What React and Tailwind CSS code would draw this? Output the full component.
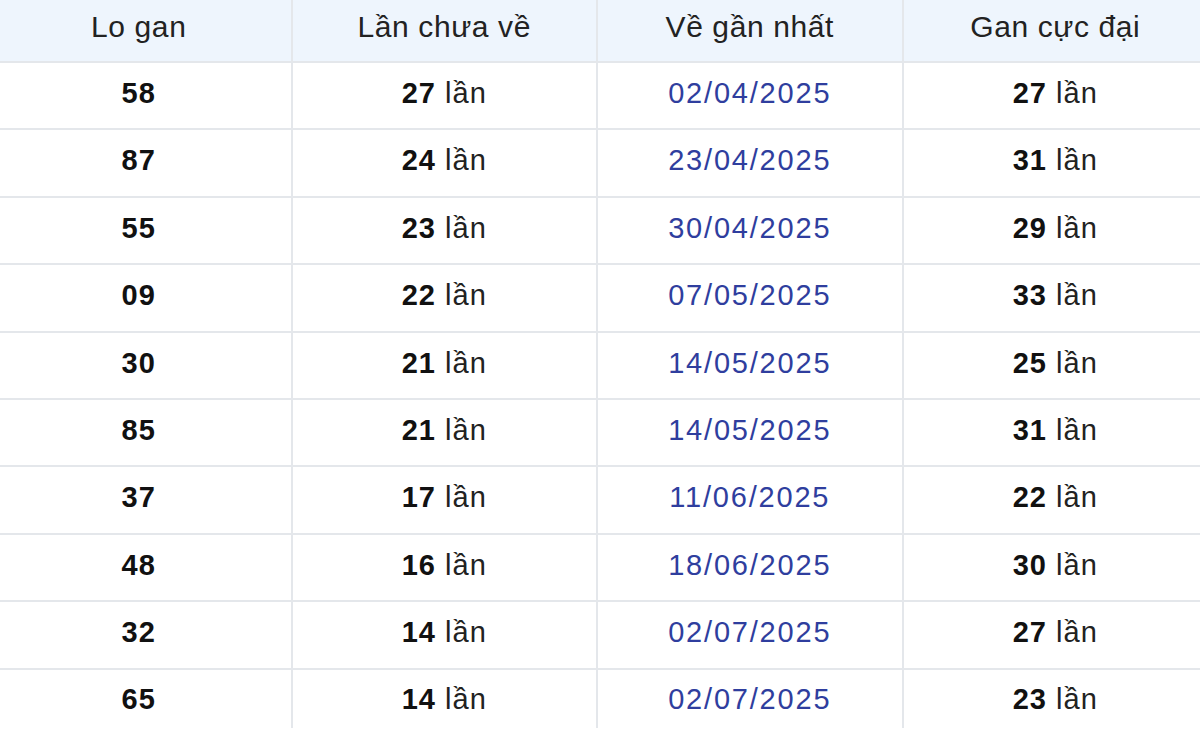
import React from "react";

const rows = [
  ["58", "27", "02/04/2025", "27"],
  ["87", "24", "23/04/2025", "31"],
  ["55", "23", "30/04/2025", "29"],
  ["09", "22", "07/05/2025", "33"],
  ["30", "21", "14/05/2025", "25"],
  ["85", "21", "14/05/2025", "31"],
  ["37", "17", "11/06/2025", "22"],
  ["48", "16", "18/06/2025", "30"],
  ["32", "14", "02/07/2025", "27"],
  ["65", "14", "02/07/2025", "23"],
];

const cell =
  "flex items-center justify-center border-r-2 border-b-2 border-[#e4e7eb] box-border";

export default function App() {
  return (
    <div className="w-[1200px] h-[736px] bg-white overflow-hidden font-['Liberation_Sans',Arial,sans-serif]">
      <div className="h-[728px] overflow-hidden">
        <div className="ml-[-13px] w-[1222px] grid grid-cols-4">
          {["Lo gan", "Lần chưa về", "Về gần nhất", "Gan cực đại"].map((h) => (
            <div
              key={h}
              className={`${cell} h-[63px] bg-[#eef5fd] text-[#222] text-[30px] tracking-[0.6px] pb-[8px]`}
            >
              {h}
            </div>
          ))}
          {rows.map((r, i) => (
            <React.Fragment key={i}>
              <div className={`${cell} h-[67.4px] pb-[4px] text-[29px] tracking-[1px] font-bold text-[#111]`}>
                {r[0]}
              </div>
              <div className={`${cell} h-[67.4px] pb-[4px] text-[29px] tracking-[1px] text-[#222]`}>
                <span className="font-bold text-[#111]">{r[1]}</span>
                <span>&nbsp;lần</span>
              </div>
              <div className={`${cell} h-[67.4px] pb-[4px] text-[29px] tracking-[1.8px] text-[#2f3e9e]`}>
                {r[2]}
              </div>
              <div className={`${cell} h-[67.4px] pb-[4px] text-[29px] tracking-[1px] text-[#222]`}>
                <span className="font-bold text-[#111]">{r[3]}</span>
                <span>&nbsp;lần</span>
              </div>
            </React.Fragment>
          ))}
        </div>
      </div>
    </div>
  );
}
